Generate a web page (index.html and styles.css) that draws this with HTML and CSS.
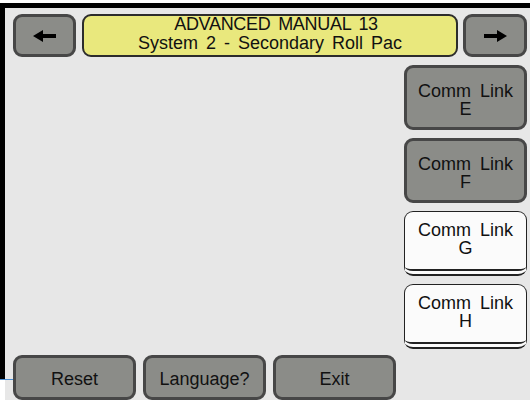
FILE: index.html
```html
<!DOCTYPE html>
<html lang="en">
<head>
    <meta charset="UTF-8">
    <meta name="viewport" content="width=device-width, initial-scale=1.0">
    <title>Advanced Manual 13</title>
    <link rel="stylesheet" href="styles.css">
</head>
<body>
    <div class="screen">
        <div class="bezel"></div>
        <div class="panel">
            <div class="top-row">
                <button class="btn nav-btn" aria-label="Previous">
                    <svg width="24" height="12" viewBox="0 0 24 12">
                        <path d="M0 6 L10 0 L10 4 L23 4 L23 8 L10 8 L10 12 Z" fill="#000"/>
                    </svg>
                </button>
                <div class="title">
                    <span class="title-main">ADVANCED MANUAL 13</span>
                    <span>System 2 - Secondary Roll Pac</span>
                </div>
                <button class="btn nav-btn" aria-label="Next">
                    <svg width="24" height="12" viewBox="0 0 24 12">
                        <path d="M24 6 L14 0 L14 4 L1 4 L1 8 L14 8 L14 12 Z" fill="#000"/>
                    </svg>
                </button>
            </div>

            <div class="main">
                <div class="link-list">
                    <button class="btn link-btn">Comm Link<br>E</button>
                    <button class="btn link-btn">Comm Link<br>F</button>
                    <button class="btn link-btn raised">Comm Link<br>G</button>
                    <button class="btn link-btn raised">Comm Link<br>H</button>
                </div>
            </div>

            <div class="bottom-row">
                <button class="btn foot-btn">Reset</button>
                <button class="btn foot-btn">Language?</button>
                <button class="btn foot-btn">Exit</button>
            </div>
        </div>
        <div class="cursor-line"></div>
    </div>
</body>
</html>
```

FILE: styles.css
```css
* {
    box-sizing: border-box;
}
body {
    margin: 0;
    background-color: #ffffff;
    font-family: "Liberation Sans", Arial, sans-serif;
}
.screen {
    position: relative;
    display: flex;
    width: 530px;
    height: 397px;
    margin-top: 3px;
    border-top: 5px solid #000;
}
.bezel {
    width: 5px;
    background: linear-gradient(#000 0, #000 371px, #fff 371px);
}
.panel {
    flex: 1;
    display: flex;
    flex-direction: column;
    padding: 6px 3px 0 8px;
    background-color: #e7e7e7;
}
.btn {
    font-family: "Liberation Sans", Arial, sans-serif;
    font-size: 18px;
    color: #111;
    background-color: #8b8c88;
    border: 3px solid #474747;
    border-radius: 9px;
    padding: 0;
    margin: 0;
    word-spacing: 4px;
}
.top-row {
    display: flex;
    height: 43px;
}
.nav-btn {
    width: 63px;
    display: flex;
    align-items: center;
    justify-content: center;
}
.top-row .nav-btn:last-child {
    width: 64px;
    margin-left: 5px;
}
.title {
    width: 376px;
    margin-left: 6px;
    display: flex;
    flex-direction: column;
    justify-content: center;
    align-items: center;
    padding-bottom: 4px;
    background-color: #e9e87d;
    border: 2px solid #2c2c2c;
    border-radius: 9px;
    font-size: 18px;
    line-height: 19px;
    color: #111;
    word-spacing: 3px;
}
.title-main {
    letter-spacing: -0.3px;
    padding-left: 12px;
}
.main {
    flex: 1;
    display: flex;
    justify-content: flex-end;
    padding-top: 8px;
}
.link-list {
    width: 123px;
    display: flex;
    flex-direction: column;
    gap: 8px;
}
.link-list .link-btn {
    height: 65px;
    line-height: 18px;
    padding-top: 4px;
}
.link-list .raised {
    background-color: #fbfbfb;
    border: 1px solid #222;
    border-bottom: 7px double #222;
    padding-top: 0;
    padding-bottom: 3px;
}
.bottom-row {
    display: flex;
    gap: 7px;
    height: 45px;
    margin-top: 6px;
}
.foot-btn {
    width: 123px;
    line-height: 20px;
    padding-top: 2px;
}
.cursor-line {
    position: absolute;
    left: 0;
    top: 371px;
    width: 13px;
    height: 1px;
    background-color: #4b8fd6;
}
```
